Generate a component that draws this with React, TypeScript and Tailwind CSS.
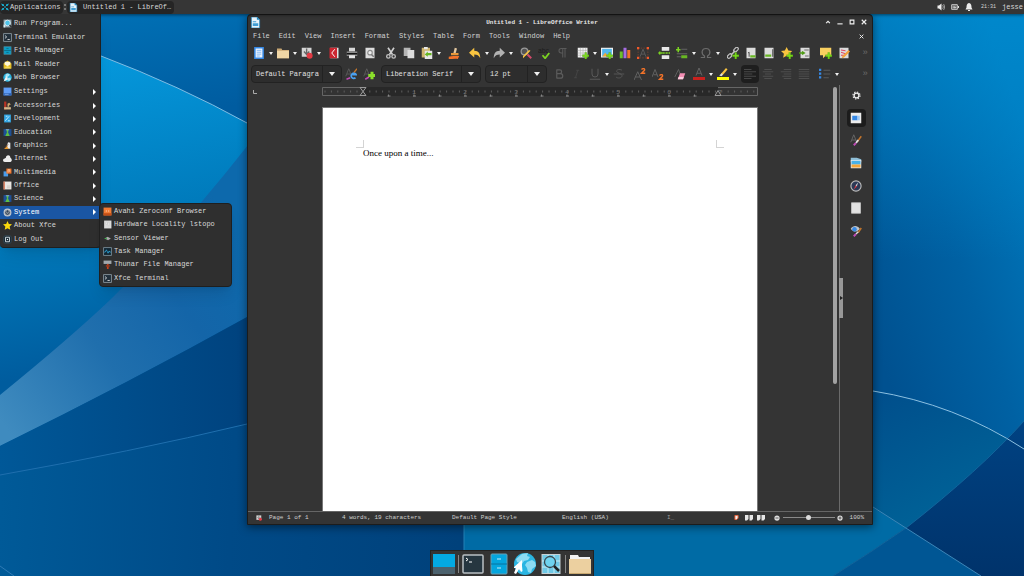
import React from 'react';

type IconProps = { name: string; className?: string };

// All icons are drawn on a 16x16 grid
const plus = (
  <path d="M11 8v3H8v2.500h3v3h2.500v-3h3V11h-3V8z" transform="translate(-.6 -.6)" fill="#7bdc1c" stroke="#3f8a0a" strokeWidth=".4" />
);
const sheet = <path d="M2 1h12v14H2z" fill="#dcdcdc" />;

const icons: Record<string, React.ReactNode> = {
  xfce: (
    <g fill="#19b4d8">
      <path d="M0 1l6 2v3H3zM16 1l-6 2v3h3zM0 15l6-2v-3H3zM16 15l-6-2v-3h3z" />
      <path d="M6 7h4v2H6z" />
    </g>
  ),
  writer: (
    <>
      <path d="M2 0h8l4 4v12H2z" fill="#e8f4fb" stroke="#1c88c4" />
      <path d="M10 0v4h4z" fill="#1c88c4" />
      <path d="M4 6h5v1.500H4zM4 9h8v4H4z" fill="#3f9dd4" />
    </>
  ),
  run: (
    <>
      <path d="M1 1h14v14H1z" fill="#8f9ea6" />
      <circle cx="8" cy="7" r="5" fill="#4fc3e8" stroke="#e8f2f5" strokeWidth="1.500" />
      <path d="M11.500 10.500l3.500 4" stroke="#222" strokeWidth="2" />
      <path d="M1 10h3v5H1z" fill="#d8eef5" />
    </>
  ),
  terminal: (
    <>
      <path d="M1 1h14v14H1z" fill="#22303b" stroke="#8d9aa3" strokeWidth="1.500" />
      <path d="M3.500 4.500l3 2.500-3 2.500M8 11.500h4" stroke="#e8e8e8" strokeWidth="1.500" fill="none" />
    </>
  ),
  files: (
    <>
      <path d="M1.500 1h13v14h-13z" fill="#0b9cc4" stroke="#587f8c" />
      <path d="M2 8h12M6 4.500h4M6 11.500h4" stroke="#075e77" strokeWidth="1.200" />
    </>
  ),
  mail: (
    <>
      <path d="M1 6l7-5 7 5v9H1z" fill="#e3bd24" />
      <path d="M3 3h10v5l-5 3-5-3z" fill="#fff8d8" />
      <path d="M1 15l7-5 7 5z" fill="#f6dc5a" />
    </>
  ),
  globe: (
    <>
      <circle cx="8" cy="8" r="7.500" fill="#27b0dc" />
      <path d="M8 1l4 1-1 3-3 2 1 2 4-1 1 3-3 3-3-1-1-4-3-3 1-4z" fill="#a5e4f5" />
      <path d="M1 15L6 5l2 7z" fill="#f3f3f3" />
    </>
  ),
  settings: (
    <>
      <path d="M1 1h14v14H1z" fill="#5f9df5" />
      <path d="M1 11h14v4H1z" fill="#2c64b8" />
      <path d="M3 13h7" stroke="#b9d4fa" />
    </>
  ),
  accessories: (
    <>
      <path d="M2 1h4v14H2z" fill="#b83424" />
      <path d="M2 11h12v4H2z" fill="#d7b98a" />
      <path d="M8 10V5l3-2 3 3-3 1v3z" fill="#cfa46a" />
    </>
  ),
  development: (
    <>
      <path d="M2 1h12v14H2z" fill="#33a7e5" />
      <path d="M4 12l7-8M5 4h3M9 12h3" stroke="#d7f0fc" strokeWidth="1.500" />
    </>
  ),
  education: (
    <>
      <path d="M1 2h14v12H1z" fill="#1d5097" />
      <path d="M6 3h4l-1 5 3 6H4l3-6z" fill="#5ebd45" />
      <path d="M5 3h6" stroke="#c8e1ff" />
    </>
  ),
  graphics: (
    <>
      <path d="M2 14l5-6 4 6z" fill="#e89b31" />
      <path d="M9 2l4 1v11l-4-1-2-5z" fill="#ececec" />
      <path d="M9 6l-6 7" stroke="#7c4a20" strokeWidth="1.500" />
    </>
  ),
  internet: <path d="M3 14a3 3 0 010-6c1-1 2-1 2-1 0-6 8-6 8-1 4 3 3 8 0 8z" fill="#ededed" />,
  multimedia: (
    <>
      <path d="M1 6h8v9H1z" fill="#4b9be8" />
      <path d="M6 1h9v9H6z" fill="#f0772e" />
      <path d="M9 8V3h3v4" stroke="#fff0e0" fill="none" />
    </>
  ),
  office: (
    <>
      <path d="M1 1h14v14H1z" fill="#e9e6e2" />
      <path d="M1 1h2v14H1z" fill="#d0582f" />
      <path d="M7 9h6M7 12h6" stroke="#b9b2a8" />
    </>
  ),
  system: (
    <>
      <circle cx="8" cy="8" r="6" fill="#8c939c" stroke="#c3c8cf" strokeWidth="2" />
      <path d="M8 4v4M6 6a3 3 0 104 0" stroke="#24364f" fill="none" strokeWidth="1.500" />
    </>
  ),
  star: <path d="M8 0l2.400 5.300 5.600.6-4.200 3.900 1.200 5.700L8 12.700 3 15.500l1.200-5.700L0 5.900l5.600-.6z" fill="#fbd80c" />,
  logout: (
    <>
      <rect x="1" y="1" width="14" height="14" rx="4" fill="#1b2b36" stroke="#3c525f" />
      <path d="M4.500 4h7v8h-7z" fill="none" stroke="#e5eef2" strokeWidth="1.500" />
      <path d="M7 8h2" stroke="#e5eef2" strokeWidth="2" />
    </>
  ),
  avahi: (
    <>
      <path d="M1 1h14v14H1z" fill="#f27b34" />
      <path d="M1 11h14v4H1z" fill="#c54f16" />
      <path d="M5 6h2v2H5zM9 6h2v2H9z" fill="#ffd3b5" />
    </>
  ),
  hardware: (
    <>
      <path d="M2 1h13v14H2z" fill="#dcdcdc" />
      <path d="M5 4h3v3H5zM9 4h2v6H9z" fill="#f7f7f7" stroke="#b5b5b5" strokeWidth=".6" />
    </>
  ),
  sensor: (
    <>
      <path d="M3 8l5-3 6 3-5 3z" fill="#a9a9a9" />
      <path d="M3 7h4v2H3z" fill="#42ad50" />
    </>
  ),
  task: (
    <>
      <path d="M1 1h14v14H1z" fill="#132733" stroke="#8aa0ad" strokeWidth="1.300" />
      <path d="M2 9h2l2-4 3 6 2-4 1 2h2" stroke="#2fa8dc" strokeWidth="1.400" fill="none" />
    </>
  ),
  thunar: (
    <>
      <path d="M1 1h14v6H1z" fill="#a0a7ab" />
      <path d="M7 7h3v9H7z" fill="#c7401a" />
      <path d="M5 9h7v3H5z" fill="#94351b" />
    </>
  ),
  newdoc: (
    <>
      <path d="M2.500 1h11v14h-11z" fill="#e9f3ff" stroke="#3689e6" strokeWidth="2" />
      <path d="M5 4.500h6M5 7h6M5 9.500h6M5 12h4" stroke="#6aaaf0" />
    </>
  ),
  open: (
    <>
      <path d="M0 2h6l1 2h9v11H0z" fill="#c9a773" />
      <path d="M0 5h16v10H0z" fill="#f0d6a5" />
    </>
  ),
  save: (
    <>
      <path d="M1 1h13v12H1z" fill="#d4d4d4" />
      <path d="M7.500 2v7M4 6l3.500 4L11 6" stroke="#666" strokeWidth="1.800" fill="none" />
      <circle cx="11.500" cy="11.500" r="4" fill="#e33b44" />
    </>
  ),
  pdf: (
    <>
      <path d="M3 1h11v14H3z" fill="#e3e3e3" />
      <path d="M2 1h10v14H2z" fill="#cc2630" />
      <path d="M9 3L5 8l4 5" stroke="#fff" strokeWidth="1.300" fill="none" />
    </>
  ),
  print: (
    <>
      <path d="M4 1h8v5H4z" fill="#d8d8d8" />
      <path d="M1 6h14v6H1z" fill="#8a8a8a" />
      <path d="M1 8h14v2H1z" fill="#141414" />
      <path d="M4 11h8v4H4z" fill="#e6e6e6" />
    </>
  ),
  preview: (
    <>
      {sheet}
      <circle cx="8" cy="7.500" r="3" fill="#eee" stroke="#8a8a8a" strokeWidth="1.500" />
      <path d="M10 10l3 3" stroke="#777" strokeWidth="2" />
    </>
  ),
  cut: (
    <>
      <path d="M4 1l6 9M12 1L6 10" stroke="#d0d0d0" strokeWidth="2.200" />
      <circle cx="4.500" cy="12.500" r="2.300" fill="none" stroke="#c0c0c0" strokeWidth="1.800" />
      <circle cx="11.500" cy="12.500" r="2.300" fill="none" stroke="#c0c0c0" strokeWidth="1.800" />
    </>
  ),
  copy: (
    <>
      <path d="M1 1h9v11H1z" fill="#b4b4b4" />
      <path d="M6 4h9v11H6z" fill="#dcdcdc" />
    </>
  ),
  paste: (
    <>
      <path d="M1 1h11v13H1z" fill="#cfb56d" />
      <path d="M4 0h5v3H4z" fill="#e8e8e8" />
      <path d="M5 5h10v11H5z" fill="#e6e6e6" />
      <path d="M14 8H9V6l-4 4 4 3v-2h5z" fill="#68b723" />
    </>
  ),
  clone: (
    <>
      <path d="M9 1l3 1-2 7H7z" fill="#e5c9a0" />
      <path d="M4 8h10v3H4z" fill="#e8983a" />
      <path d="M1 13c4-1 8-1 14-1l-2 4c-3-1-8 0-12 0z" fill="#f37329" />
    </>
  ),
  undo: <path d="M7 1v4c6 0 8 4 8 10-2-4-4-5-8-5v4L0 7.500z" fill="#f9c440" />,
  redo: <path d="M9 1v4c-6 0-8 4-8 10 2-4 4-5 8-5v4l7-6.500z" fill="#b2b2b2" />,
  find: (
    <>
      <circle cx="6" cy="6" r="4.500" fill="#555" stroke="#9a9a9a" strokeWidth="1.600" />
      <path d="M10 10l5 5" stroke="#d34a6a" strokeWidth="2.500" />
      <path d="M14 5l-8 8-2 2 0-3 8-8z" fill="#f9c440" />
    </>
  ),
  spell: (
    <>
      <text x="0" y="8" fontSize="9" fill="#1c1c1c" fontFamily="Liberation Sans, sans-serif">abc</text>
      <path d="M6 11l3.500 4L15 8" stroke="#7bd321" strokeWidth="2.400" fill="none" />
    </>
  ),
  pilcrow: <path d="M9 14V2M12 14V2M14 2H7a3 3 0 000 6h2" stroke="#5a5a5a" strokeWidth="1.400" fill="none" />,
  table: (
    <>
      <path d="M1 1h13v13H1z" fill="#f1f1f1" />
      <path d="M1 4.500h13M1 8h13M1 11h13M4.500 1v13M8 1v13M11.500 1v13" stroke="#a5a5a5" strokeWidth=".7" />
      {plus}
    </>
  ),
  image: (
    <>
      <path d="M0 1h16v13H0z" fill="#f2f2f2" />
      <path d="M1.500 2.500h13v10h-13z" fill="#54b8ee" />
      <path d="M1.500 12.500l4-5 3 3 2-2 4 4z" fill="#f7a638" />
      {plus}
    </>
  ),
  chart: (
    <>
      <path d="M1 6h4v9H1z" fill="#6cc02b" />
      <path d="M6 1h4v14H6z" fill="#a56de2" />
      <path d="M11 4h4v11h-4z" fill="#f37329" />
    </>
  ),
  textbox: (
    <>
      <path d="M1.500 1.500h13v13h-13z" fill="none" stroke="#7d4a33" strokeDasharray="2 1.500" />
      <path d="M0 0h3v3H0zM13 0h3v3h-3zM0 13h3v3H0zM13 13h3v3h-3z" fill="#f1592b" />
      <path d="M4 13L8 3l4 10M5.500 9.500h5" stroke="#666" fill="none" />
    </>
  ),
  pagebreak: (
    <>
      <path d="M5 0h10v5H5zM5 11h10v5H5z" fill="#e9e9e9" />
      <path d="M6 8h10" stroke="#7bd321" strokeWidth="2" strokeDasharray="3 1" />
      <path d="M0 8l3-3v2h3v2H3v2z" fill="#7bd321" />
    </>
  ),
  field: (
    <>
      <path d="M3 0v7M0 3.500h6" stroke="#7bd321" strokeWidth="2" />
      <path d="M7 3h8M1 9h14M1 13h6" stroke="#666" strokeWidth="1.300" />
      <path d="M7 11h8v4H7z" fill="#68b723" />
    </>
  ),
  omega: <path d="M1 14h5v-2c-5-3-4-10 2-10s7 7 2 10v2h5" stroke="#6c6c6c" strokeWidth="1.600" fill="none" />,
  link: (
    <>
      <path d="M5 11l6-6" stroke="#c4c4c4" strokeWidth="2" />
      <rect x="0" y="10" width="7" height="4" rx="2" transform="rotate(-45 3.500 12)" stroke="#c4c4c4" strokeWidth="1.500" fill="none" />
      <rect x="8.500" y="1.500" width="7" height="4" rx="2" transform="rotate(-45 12 3.500)" stroke="#c4c4c4" strokeWidth="1.500" fill="none" />
      {plus}
    </>
  ),
  footnote: (
    <>
      {sheet}
      <path d="M4 8l1.500-1v6" stroke="#444" strokeWidth="1.200" fill="none" />
      <path d="M7 11h7v3H7z" fill="#68b723" />
    </>
  ),
  endnote: (
    <>
      {sheet}
      <path d="M13 3v10" stroke="#555" strokeWidth="1.500" />
      <path d="M3 10h8v3H3z" fill="#68b723" />
    </>
  ),
  bookmark: (
    <>
      <path d="M7.500 0l2.300 4.800 5.200.6-3.900 3.600 1.100 5.200-4.700-2.600-4.700 2.600L3.900 9 0 5.400l5.200-.6z" fill="#f9c440" />
      {plus}
    </>
  ),
  crossref: (
    <>
      {sheet}
      <path d="M7 4h6M8 12h5" stroke="#6a6a6a" strokeWidth="1.300" />
      <path d="M0 8h6M4 6l3 2-3 2" stroke="#4f9c16" strokeWidth="2" fill="none" />
    </>
  ),
  comment: (
    <>
      <path d="M0 1h15v10H8l-4 4v-4H0z" fill="#f9d060" />
      {plus}
    </>
  ),
  track: (
    <>
      {sheet}
      <path d="M4 4l6 1M4 7l6 2M4 11h4" stroke="#e0405a" strokeWidth="1.300" />
      <path d="M14 4l2 2-8 8-3 1 1-3z" fill="#f3a13a" />
    </>
  ),
  updateStyle: (
    <>
      <path d="M1 11L5 1l4 10M2.500 8h5" stroke="#5c5c5c" fill="none" strokeWidth="1.200" />
      <path d="M2 15l5-2" stroke="#c04bb5" strokeWidth="2" />
      <path d="M14 13a3.500 3.500 0 111-4H9" stroke="#4aa0f0" strokeWidth="2.200" fill="none" />
      <path d="M16 1l-4 5" stroke="#c4752b" strokeWidth="1.800" />
    </>
  ),
  newStyle: (
    <>
      <path d="M1 11L5 1l4 10M2.500 8h5" stroke="#5c5c5c" fill="none" strokeWidth="1.200" />
      <path d="M3 15l5-3" stroke="#c04bb5" strokeWidth="2" />
      <path d="M10 5v3H7v4h3v3h4v-3h3V8h-3V5z" fill="#8be02a" />
    </>
  ),
  bold: <path d="M5 2v12M5 2.500h4a2.500 2.500 0 010 5H5h5a3 3 0 010 6H5" stroke="#5c5c5c" strokeWidth="1.600" fill="none" />,
  italic: <path d="M7 3h4M4 13h4M9 3L6 13" stroke="#4a4a4a" fill="none" />,
  underline: <path d="M4 1v7a4 4 0 008 0V1M1 15h14" stroke="#5a5a5a" strokeWidth="1.300" fill="none" />,
  strike: <path d="M12 3c-3-2-8-1-7 2 1 2 6 2 7 5 0 4-6 4-8 2M1 8h14" stroke="#565656" strokeWidth="1.300" fill="none" />,
  sup: (
    <>
      <path d="M0 16L5 5l5 11M2 12h6" stroke="#636363" fill="none" strokeWidth="1.300" />
      <path d="M10 2c2-2 5-1 4 1l-4 4h5" stroke="#f37329" strokeWidth="1.800" fill="none" />
    </>
  ),
  sub: (
    <>
      <path d="M0 12L4 2l4 10M2 9h5" stroke="#636363" fill="none" strokeWidth="1.300" />
      <path d="M10 10c2-2 5-1 4 1l-4 4h5" stroke="#f37329" strokeWidth="1.800" fill="none" />
    </>
  ),
  eraser: (
    <>
      <path d="M1 12L6 2l3 8" stroke="#636363" fill="none" strokeWidth="1.200" />
      <path d="M8 7h7l-3 8H5z" fill="#f58fb5" />
      <path d="M6 12h7l-1 3H5z" fill="#fbd0e0" />
    </>
  ),
  fontColor: (
    <>
      <path d="M4 10L8 0l4 10M5.500 7h5" stroke="#6a6a6a" fill="none" strokeWidth="1.200" />
      <path d="M0 12h16v4H0z" fill="#c9211e" />
    </>
  ),
  highlight: (
    <>
      <path d="M12 0l2 2-6 7-3 1 1-3z" fill="#f9c440" />
      <path d="M3 10l3-3 2 2-2 2z" fill="#ddd" />
      <path d="M0 12h16v4H0z" fill="#ff0" />
    </>
  ),
  alignLeft: <path d="M0 2h10M0 5h16M0 8h11M0 11h16M0 14h10" stroke="#555" />,
  alignCenter: <path d="M3 2h10M1 5h14M4 8h8M1 11h14M3 14h10" stroke="#575757" />,
  alignRight: <path d="M5 2h10M1 5h14M5 8h10M3 11h12M5 14h10" stroke="#575757" />,
  justify: <path d="M1 2h14M1 5h14M1 8h14M1 11h14M1 14h14" stroke="#575757" />,
  bullets: (
    <>
      <path d="M0 1h3v3H0zM0 6h3v3H0zM0 11h3v3H0z" fill="#3689e6" />
      <path d="M6 3h9M6 8h9M6 13h7" stroke="#5c5c5c" strokeWidth="1.300" />
    </>
  ),
  gear: (
    <>
      <circle cx="8" cy="8" r="4.300" fill="none" stroke="#ececec" strokeWidth="2.400" />
      <circle cx="8" cy="8" r="6.300" fill="none" stroke="#ececec" strokeWidth="2" strokeDasharray="2.500 2.450" />
    </>
  ),
  properties: (
    <>
      <path d="M1 1h14v14H1z" fill="#ececec" />
      <path d="M3 5h7v6H3z" fill="#3689e6" />
      <path d="M10 5h3v6h-3z" fill="#9ec8f5" />
    </>
  ),
  styles: (
    <>
      <path d="M1 11L5 1l4 10M2.500 8h5" stroke="#6a6a6a" fill="none" strokeWidth="1.200" />
      <path d="M15 3l-5 7" stroke="#c4752b" strokeWidth="2" />
      <path d="M11 8l-3 4" stroke="#ddd" strokeWidth="2.500" />
      <path d="M8 12l-3 3" stroke="#c04bb5" strokeWidth="2.500" />
    </>
  ),
  gallery: (
    <>
      <path d="M1 1h8l6 2v4H1z" fill="#8fbfd8" />
      <path d="M1 4h14v11H1z" fill="#ececec" />
      <path d="M2 5h12v5H2z" fill="#48b1e8" />
      <path d="M2 10h12v4H2z" fill="#f7a638" />
    </>
  ),
  navigator: (
    <>
      <circle cx="8" cy="8" r="6.800" fill="#2c3956" stroke="#bcbcbc" strokeWidth="1.500" />
      <path d="M11 3L9 8.500 7.500 7z" fill="#d8d8d8" />
      <path d="M5 13l2.500-6L9 8.500z" fill="#e33b44" />
    </>
  ),
  page: <path d="M2 1h12v14H2z" fill="#e2e2e2" stroke="#c8c8c8" />,
  inspector: (
    <>
      <path d="M1 5c3-5 9-5 12 0-3 5-9 5-12 0z" fill="#c0c4c8" />
      <circle cx="6" cy="5.500" r="3" fill="#3689e6" />
      <path d="M15 4l-4 6" stroke="#c4752b" strokeWidth="2" />
      <path d="M11 9l-3 3" stroke="#ddd" strokeWidth="2" />
      <path d="M8 12l-3 3" stroke="#c04bb5" strokeWidth="2.500" />
    </>
  ),
  volume: (
    <>
      <path d="M1 5h3l5-4v14l-5-4H1z" fill="#eee" />
      <path d="M11 4c2 2 2 6 0 8M13 2c3 3 3 9 0 12" stroke="#bbb" strokeWidth="1.500" fill="none" />
    </>
  ),
  battery: (
    <>
      <rect x="1" y="3" width="12" height="10" rx="1" fill="#777" stroke="#ccc" strokeWidth="1.500" />
      <path d="M14 6h2v4h-2zM3 9l4-3v2h4l-4 3V9z" fill="#ddd" />
    </>
  ),
  bell: <path d="M8 0c4 1 5 4 5 9l2 4H1l2-4c0-5 1-8 5-9zM6 14h4v2H6z" fill="#ececec" />,
  shade: <path d="M3 11l5-5 5 5" stroke="#f0f0f0" strokeWidth="3" fill="none" />,
  minimize: <path d="M1 13h14" stroke="#f0f0f0" strokeWidth="3" />,
  maximize: <path d="M3 3h10v10H3z" stroke="#f0f0f0" strokeWidth="3" fill="none" />,
  close: <path d="M2 2l12 12M14 2L2 14" stroke="#f0f0f0" strokeWidth="3" />,
  singlePage: <path d="M3 1h10v9l-5 5H3z" fill="#f0f0f0" stroke="#f1592b" strokeWidth="3" />,
  multiPage: <path d="M0 2h7v8l-3 3H0zM9 2h7v8l-3 3H9z" fill="#e6e6e6" />,
  zoomOut: (
    <>
      <circle cx="8" cy="8" r="7" fill="#ddd" />
      <path d="M4 8h8" stroke="#333" strokeWidth="2" />
    </>
  ),
  zoomIn: (
    <>
      <circle cx="8" cy="8" r="7" fill="#ddd" />
      <path d="M4 8h8M8 4v8" stroke="#333" strokeWidth="2" />
    </>
  ),
};

const Icon: React.FC<IconProps> = ({ name, className = 'size-3' }) => (
  <svg viewBox="0 0 16 16" className={`shrink-0 ${className}`} aria-hidden="true">
    {icons[name]}
  </svg>
);

const Wallpaper: React.FC = () => (
  <svg viewBox="0 0 1024 576" preserveAspectRatio="none" className="absolute inset-0 h-full w-full" aria-hidden="true">
    <defs>
      <linearGradient id="sky" gradientUnits="userSpaceOnUse" x1="0" y1="14" x2="20" y2="140">
        <stop offset="0" stopColor="#0073b8" />
        <stop offset="1" stopColor="#005ca0" />
      </linearGradient>
      <linearGradient id="swell" gradientUnits="userSpaceOnUse" x1="100" y1="56" x2="160" y2="350">
        <stop offset="0" stopColor="#0598dc" />
        <stop offset="0.550" stopColor="#007abb" />
        <stop offset="1" stopColor="#005c9e" />
      </linearGradient>
      <linearGradient id="beam" gradientUnits="userSpaceOnUse" x1="0" y1="420" x2="247" y2="240">
        <stop offset="0" stopColor="#3f8bbf" />
        <stop offset="0.400" stopColor="#206fad" />
        <stop offset="0.700" stopColor="#1465a8" />
        <stop offset="1" stopColor="#0d69ac" />
      </linearGradient>
      <linearGradient id="deep" gradientUnits="userSpaceOnUse" x1="0" y1="440" x2="240" y2="440">
        <stop offset="0" stopColor="#005898" />
        <stop offset="1" stopColor="#00437f" />
      </linearGradient>
      <linearGradient id="floor" gradientUnits="userSpaceOnUse" x1="0" y1="520" x2="460" y2="540">
        <stop offset="0" stopColor="#005a98" />
        <stop offset="0.500" stopColor="#004a87" />
        <stop offset="1" stopColor="#00417b" />
      </linearGradient>
      <linearGradient id="right" gradientUnits="userSpaceOnUse" x1="860" y1="300" x2="1060" y2="230">
        <stop offset="0" stopColor="#005190" />
        <stop offset="0.500" stopColor="#0061a3" />
        <stop offset="1" stopColor="#0077bb" />
      </linearGradient>
      <linearGradient id="glow" x1="0" y1="0" x2="0" y2="1">
        <stop offset="0" stopColor="#0092d6" stopOpacity="0.650" />
        <stop offset="1" stopColor="#0092d6" stopOpacity="0" />
      </linearGradient>
      <linearGradient id="bowl" gradientUnits="userSpaceOnUse" x1="873" y1="400" x2="940" y2="520">
        <stop offset="0" stopColor="#004f8c" />
        <stop offset="1" stopColor="#006297" />
      </linearGradient>
      <linearGradient id="navy" x1="0" y1="0" x2="0" y2="1">
        <stop offset="0" stopColor="#004282" />
        <stop offset="1" stopColor="#00336b" />
      </linearGradient>
    </defs>
    <path d="M0 0h1024v576H0z" fill="url(#sky)" />
    <path d="M0 20Q60 38 101 56Q180 86 247 123Q320 160 380 220V400H0z" fill="url(#swell)" />
    <path d="M101 56Q180 86 247 123" fill="none" stroke="#7fbde4" />
    <path d="M0 395Q70 338 110 300Q180 232 248 145L400 200L247 317Q130 382 0 446z" fill="url(#beam)" />
    <path d="M0 446Q130 382 247 317L464 300V576H0z" fill="url(#deep)" />
    <path d="M0 475Q130 452 247 424L464 400V576H0z" fill="url(#floor)" />
    <path d="M0 475Q130 452 247 424" fill="none" stroke="#1f6fae" />
    <path d="M0 566L14 576" stroke="#2d7ab5" />
    <path d="M464 500h560v76H464z" fill="#006ba5" />
    <path d="M464 500v76" stroke="#2382b8" />
    <path d="M700 0h324v470H700z" fill="url(#right)" />
    <path d="M700 0h324v260H700z" fill="url(#glow)" />
    <path d="M800 380Q955 400 1024 449L906 528Q870 553 833 576H800z" fill="url(#bowl)" />
    <path d="M860 500L906 528Q870 553 833 576H700V500z" fill="#006ba5" />
    <path d="M1024 421Q980 470 906 528Q870 553 833 576H1024z" fill="url(#navy)" />
    <path d="M906 528Q870 553 833 576H981z" fill="#005694" />
    <path d="M1024 421Q980 470 906 528Q870 553 833 576" fill="none" stroke="#12659c" />
    <path d="M873 507L981 576" stroke="#3c86b8" />
    <path d="M873 391Q955 404 1024 449" fill="none" stroke="#8cc0e0" />
  </svg>
);

type Entry = { label: string; icon: string; sub?: boolean; active?: boolean };

const launchers: Entry[] = [
  { label: 'Terminal Emulator', icon: 'terminal' },
  { label: 'File Manager', icon: 'files' },
  { label: 'Mail Reader', icon: 'mail' },
  { label: 'Web Browser', icon: 'globe' },
];

const categories: Entry[] = [
  { label: 'Accessories', icon: 'accessories', sub: true },
  { label: 'Development', icon: 'development', sub: true },
  { label: 'Education', icon: 'education', sub: true },
  { label: 'Graphics', icon: 'graphics', sub: true },
  { label: 'Internet', icon: 'internet', sub: true },
  { label: 'Multimedia', icon: 'multimedia', sub: true },
  { label: 'Office', icon: 'office', sub: true },
  { label: 'Science', icon: 'education', sub: true },
  { label: 'System', icon: 'system', sub: true, active: true },
];

const session: Entry[] = [
  { label: 'About Xfce', icon: 'star' },
  { label: 'Log Out', icon: 'logout' },
];

const systemTools: Entry[] = [
  { label: 'Avahi Zeroconf Browser', icon: 'avahi' },
  { label: 'Hardware Locality lstopo', icon: 'hardware' },
  { label: 'Sensor Viewer', icon: 'sensor' },
  { label: 'Task Manager', icon: 'task' },
  { label: 'Thunar File Manager', icon: 'thunar' },
  { label: 'Xfce Terminal', icon: 'terminal' },
];

const MenuGroup: React.FC<{ items: Entry[]; className: string }> = ({ items, className }) => (
  <ul className={`flex flex-col ${className}`}>
    {items.map((item) => (
      <li key={item.label} className="min-h-0 flex-1">
        <button
          className={`flex h-full w-full items-center gap-[2px] pr-1 pl-[3px] text-left ${
            item.active ? 'bg-[#1a56a4] text-white' : 'hover:bg-[#1a56a4]'
          }`}
        >
          <Icon name={item.icon} className="size-[9px]" />
          <span className="flex-1">{item.label}</span>
          {item.sub && (
            <svg viewBox="0 0 3 6" className="h-[6px] w-[3px]" aria-hidden="true">
              <path d="M0 0l3 3-3 3z" fill="#fff" />
            </svg>
          )}
        </button>
      </li>
    ))}
  </ul>
);

const Caret: React.FC = () => (
  <svg viewBox="0 0 4 3" className="h-[3px] w-1" aria-hidden="true">
    <path d="M0 0h4L2 3z" fill="#f0f0f0" />
  </svg>
);

type Tool = { icon: string; label: string; menu?: boolean; on?: boolean };

const standardBar: Tool[][] = [
  [
    { icon: 'newdoc', label: 'New', menu: true },
    { icon: 'open', label: 'Open', menu: true },
    { icon: 'save', label: 'Save', menu: true },
  ],
  [
    { icon: 'pdf', label: 'Export as PDF' },
    { icon: 'print', label: 'Print' },
    { icon: 'preview', label: 'Print Preview' },
  ],
  [
    { icon: 'cut', label: 'Cut' },
    { icon: 'copy', label: 'Copy' },
    { icon: 'paste', label: 'Paste', menu: true },
  ],
  [{ icon: 'clone', label: 'Clone Formatting' }],
  [
    { icon: 'undo', label: 'Undo', menu: true },
    { icon: 'redo', label: 'Redo', menu: true },
  ],
  [
    { icon: 'find', label: 'Find and Replace' },
    { icon: 'spell', label: 'Spelling' },
    { icon: 'pilcrow', label: 'Formatting Marks' },
  ],
  [
    { icon: 'table', label: 'Insert Table', menu: true },
    { icon: 'image', label: 'Insert Image' },
    { icon: 'chart', label: 'Insert Chart' },
    { icon: 'textbox', label: 'Insert Text Box' },
  ],
  [
    { icon: 'pagebreak', label: 'Insert Page Break' },
    { icon: 'field', label: 'Insert Field', menu: true },
    { icon: 'omega', label: 'Insert Special Character', menu: true },
  ],
  [
    { icon: 'link', label: 'Insert Hyperlink' },
    { icon: 'footnote', label: 'Insert Footnote' },
    { icon: 'endnote', label: 'Insert Endnote' },
    { icon: 'bookmark', label: 'Insert Bookmark' },
    { icon: 'crossref', label: 'Insert Cross-reference' },
  ],
  [
    { icon: 'comment', label: 'Insert Comment' },
    { icon: 'track', label: 'Track Changes' },
  ],
];

const ToolGroup: React.FC<{ tools: Tool[] }> = ({ tools }) => (
  <div className="flex items-center">
    {tools.map((tool) => (
      <React.Fragment key={tool.label}>
        <button
          aria-label={tool.label}
          className={`flex size-[18px] items-center justify-center rounded-sm ${tool.on ? 'bg-[#1e1e1e]' : ''}`}
        >
          <Icon name={tool.icon} className="size-3" />
        </button>
        {tool.menu && (
          <button aria-label={`${tool.label} options`} className="flex h-[18px] w-[6px] items-center justify-center">
            <Caret />
          </button>
        )}
      </React.Fragment>
    ))}
  </div>
);

const Combo: React.FC<{ label: string; value: string; className: string }> = ({ label, value, className }) => (
  <div className={`relative flex h-[18px] rounded-sm border border-[#222] bg-[#2d2d2d] ${className}`}>
    <select
      aria-label={label}
      className="min-w-0 flex-1 appearance-none overflow-hidden pr-[22px] pl-1 text-[7px] text-[#e0e0e0] outline-none"
    >
      <option>{value}</option>
    </select>
    <span className="pointer-events-none absolute inset-y-0 right-0 flex w-[19px] items-center justify-center border-l border-[#222]">
      <svg viewBox="0 0 6 4" className="h-1 w-[6px]" aria-hidden="true">
        <path d="M0 0h6L3 4z" fill="#f0f0f0" />
      </svg>
    </span>
  </div>
);

const Overflow: React.FC = () => (
  <button aria-label="More tools" className="ml-auto px-1 text-[9px] leading-none text-[#6a6a6a]">
    »
  </button>
);

const INCH = 51;

const Ruler: React.FC = () => (
  <svg viewBox="0 0 436 10" className="h-[10px] w-full" aria-hidden="true">
    <path d="M.5 .5h435v8H.5z" fill="#333" stroke="#666" />
    <path d="M41 0h355v9H41z" fill="#282828" />
    {Array.from({ length: 68 }, (_, i) => 3 + i * 6.4).map((x) => (
      <path key={x} d={`M${x} 3.500v2`} stroke="#5e5e5e" strokeWidth="1" />
    ))}
    {Array.from({ length: 13 }, (_, i) => 41 + ((i + 1) * INCH) / 2).map((x) => (
      <path key={x} d={`M${x - 1} 9h3M${x} 7.500v2`} stroke="#858585" />
    ))}
    {[1, 2, 3, 4, 5, 6, 7].map((n) => (
      <text key={n} x={41 + n * INCH} y="6.500" fontSize="6" textAnchor="middle" fill="#777">
        {n}
      </text>
    ))}
    <path d="M38 .5h6l-6 8h6z" fill="#333" stroke="#999" />
    <path d="M393 8.500l3-5 3 5z" fill="#333" stroke="#999" />
  </svg>
);

const sidebarTabs: Tool[] = [
  { icon: 'gear', label: 'Sidebar Settings' },
  { icon: 'properties', label: 'Properties', on: true },
  { icon: 'styles', label: 'Styles' },
  { icon: 'gallery', label: 'Gallery' },
  { icon: 'navigator', label: 'Navigator' },
  { icon: 'page', label: 'Page' },
  { icon: 'inspector', label: 'Style Inspector' },
];

const WriterWindow: React.FC = () => (
  <main className="absolute top-[14px] right-[151px] bottom-[51px] left-[247px] flex flex-col rounded-t-sm border border-[#1c1c1c] bg-[#343434] shadow-[0_2px_8px_rgba(0,0,0,0.5)]">
    <header className="flex h-[14px] shrink-0 items-center pr-[3px] pl-[2px]">
      <Icon name="writer" className="size-[11px]" />
      <h1 className="flex-1 text-center text-[6px] font-bold text-[#e6e6e6]">Untitled 1 - LibreOffice Writer</h1>
      <div className="flex gap-[2px]">
        {['shade', 'minimize', 'maximize', 'close'].map((name) => (
          <button key={name} aria-label={name} className="flex w-[10px] items-center justify-center">
            <Icon name={name} className="size-[6px]" />
          </button>
        ))}
      </div>
    </header>

    <nav className="flex h-[14px] shrink-0 items-center pr-2 pl-[1px] text-[7px] text-[#d2d2d2]">
      {['File', 'Edit', 'View', 'Insert', 'Format', 'Styles', 'Table', 'Form', 'Tools', 'Window', 'Help'].map((item) => (
        <button key={item} className="pr-[5px] pl-1">
          {item}
        </button>
      ))}
      <button aria-label="Close document" className="ml-auto">
        <Icon name="close" className="size-[5px]" />
      </button>
    </nav>

    {/* Standard toolbar */}
    <div className="flex h-[20px] shrink-0 items-center gap-[3px] pl-[2px]">
      {standardBar.map((group, i) => (
        <ToolGroup key={i} tools={group} />
      ))}
      <Overflow />
    </div>

    {/* Formatting toolbar */}
    <div className="flex h-[22px] shrink-0 items-center gap-[3px] pl-[3px]">
      <div className="flex items-center">
        <Combo label="Paragraph Style" value="Default Paragraph Style" className="w-[91px]" />
        <ToolGroup
          tools={[
            { icon: 'updateStyle', label: 'Update Style' },
            { icon: 'newStyle', label: 'New Style' },
          ]}
        />
      </div>
      <div className="flex gap-1">
        <Combo label="Font Name" value="Liberation Serif" className="w-[100px]" />
        <Combo label="Font Size" value="12 pt" className="w-[62px]" />
      </div>
      <ToolGroup
        tools={[
          { icon: 'bold', label: 'Bold' },
          { icon: 'italic', label: 'Italic' },
          { icon: 'underline', label: 'Underline', menu: true },
          { icon: 'strike', label: 'Strikethrough' },
        ]}
      />
      <ToolGroup
        tools={[
          { icon: 'sup', label: 'Superscript' },
          { icon: 'sub', label: 'Subscript' },
        ]}
      />
      <div className="flex items-center gap-[1px] pl-[1px]">
        <ToolGroup tools={[{ icon: 'eraser', label: 'Clear Formatting' }]} />
        <ToolGroup
          tools={[
            { icon: 'fontColor', label: 'Font Color', menu: true },
            { icon: 'highlight', label: 'Highlighting', menu: true },
          ]}
        />
      </div>
      <ToolGroup
        tools={[
          { icon: 'alignLeft', label: 'Align Left', on: true },
          { icon: 'alignCenter', label: 'Center' },
          { icon: 'alignRight', label: 'Align Right' },
          { icon: 'justify', label: 'Justify' },
        ]}
      />
      <ToolGroup tools={[{ icon: 'bullets', label: 'Bullets', menu: true }]} />
      <Overflow />
    </div>

    <div className="flex min-h-0 flex-1">
      <section className="flex min-w-0 flex-1 flex-col pt-[2px]">
        <div className="grid shrink-0 grid-cols-[1fr_436px_1fr] items-center">
          <svg viewBox="0 0 4 4" className="ml-[5px] size-1" aria-hidden="true">
            <path d="M.5 0v3.500H4" stroke="#aaa" fill="none" />
          </svg>
          <Ruler />
        </div>
        <article className="mx-auto mt-[10px] w-[436px] flex-1 border border-b-0 border-[#777] bg-white px-[33px] pt-8">
          <div className="flex justify-between">
            <span className="size-2 border-r border-b border-[#d4d4d4]" />
            <span className="size-2 border-b border-l border-[#d4d4d4]" />
          </div>
          <p className="pl-[7px] font-['Liberation_Serif',serif] text-[9px] leading-[10px] text-black">
            Once upon a time...
          </p>
        </article>
      </section>

      <div className="w-[7px] pt-[2px] pl-[1px]">
        <div className="h-[70%] w-1 rounded-full bg-[#a2a2a2]" />
      </div>

      <aside className="relative w-[33px] border-l border-[#6a6a6a] pt-[1px]">
        <div className="flex h-[154px] flex-col items-center justify-between">
          {sidebarTabs.map((tab) => (
            <button
              key={tab.label}
              aria-label={tab.label}
              className={`flex h-[18px] w-[19px] items-center justify-center rounded-sm ${tab.on ? 'bg-[#1c1c1c]' : ''}`}
            >
              <Icon name={tab.icon} className={tab.icon === 'gear' ? 'size-[9px]' : 'size-3'} />
            </button>
          ))}
        </div>
        <button
          aria-label="Collapse sidebar"
          className="absolute top-[193px] -left-px flex h-10 w-1 items-center justify-center bg-[#989898]"
        >
          <svg viewBox="0 0 3 4" className="h-1 w-[3px]" aria-hidden="true">
            <path d="M0 0l3 2-3 2z" fill="#222" />
          </svg>
        </button>
      </aside>
    </div>

    <footer className="flex h-[13px] shrink-0 items-center border-t border-[#666] pr-2 pb-[1px] pl-2 text-[6px] text-[#d0d0d0]">
      <Icon name="save" className="mr-[7px] size-[6px]" />
      <span className="w-[73px]">Page 1 of 1</span>
      <span className="w-[110px]">4 words, 19 characters</span>
      <span className="w-[110px]">Default Page Style</span>
      <span className="w-[105px]">English (USA)</span>
      <span className="text-[#999]">I_</span>
      <div className="ml-auto flex items-center">
        <button aria-label="Single-page view" className="mr-[6px]">
          <Icon name="singlePage" className="size-[5px]" />
        </button>
        <button aria-label="Multiple-page view" className="mr-1">
          <Icon name="multiPage" className="size-2" />
        </button>
        <button aria-label="Book view" className="mr-[9px]">
          <Icon name="multiPage" className="size-2" />
        </button>
        <button aria-label="Zoom out" className="mr-[3px]">
          <Icon name="zoomOut" className="size-[6px]" />
        </button>
        <input
          type="range"
          aria-label="Zoom"
          defaultValue={49}
          className="mr-[2px] h-px w-[52px] appearance-none bg-[#8a8a8a] [&::-webkit-slider-thumb]:size-[5px] [&::-webkit-slider-thumb]:appearance-none [&::-webkit-slider-thumb]:rounded-full [&::-webkit-slider-thumb]:bg-[#ddd]"
        />
        <button aria-label="Zoom in" className="mr-[7px]">
          <Icon name="zoomIn" className="size-[6px]" />
        </button>
        <span>100%</span>
      </div>
    </footer>
  </main>
);

const Dock: React.FC = () => (
  <div className="absolute inset-x-0 bottom-0 flex justify-center">
    <nav className="flex h-[26px] items-center border border-b-0 border-[#222] bg-[#343434]">
      <button aria-label="Show Desktop" className="flex w-[26px] justify-center">
        <svg viewBox="0 0 22 22" className="size-[22px]">
          <path d="M0 1h22v13H0z" fill="#04a9e2" />
          <path d="M0 14h22v7H0z" fill="#4c626e" />
        </svg>
      </button>
      <span className="mx-[1px] h-[18px] w-px bg-[#888]" />
      <button aria-label="Terminal" className="flex w-[26px] justify-center">
        <svg viewBox="0 0 22 22" className="size-[22px]">
          <rect x="1" y="2" width="20" height="18" rx="1" fill="#263640" stroke="#b9c0c4" strokeWidth="1.500" />
          <path d="M4 5l2 1.500L4 8M7 9h3" stroke="#fff" fill="none" />
        </svg>
      </button>
      <button aria-label="Files" className="flex w-[26px] justify-center">
        <svg viewBox="0 0 22 22" className="size-[22px]">
          <rect x="3" y="1" width="16" height="20" rx="1" fill="#05a5dd" stroke="#6b9fb3" />
          <path d="M3 11h16" stroke="#0873a0" />
          <path d="M9 6h4M9 15h4" stroke="#c8edf9" strokeWidth="1.200" />
        </svg>
      </button>
      <button aria-label="Web Browser" className="flex w-[26px] justify-center">
        <svg viewBox="0 0 22 22" className="size-[22px]">
          <circle cx="11" cy="11" r="11" fill="#2ab5e2" />
          <path d="M8 1l6-1-1 3 3 1-2 3-4 1-2 3-5-2-1-3z" fill="#8cdcf4" />
          <path d="M13 9l5-2 3 2 1 4-4 3-1 4-3-1-1-4-2-3zM3 11l5 2 1 5-2 1-4-4z" fill="#8cdcf4" />
          <path d="M8 7v12l-3-3-3 5-2-1 2-5H-1z" fill="#fff" />
        </svg>
      </button>
      <button aria-label="Application Finder" className="flex w-[26px] justify-center">
        <svg viewBox="0 0 22 22" className="size-[22px]">
          <rect x="2" y="1.500" width="18" height="19" fill="#70c9e6" stroke="#c7d1d5" />
          <path d="M8 2v18M14 2v18M2 8h18M2 14h18" stroke="#c8edf6" />
          <circle cx="10" cy="9" r="5.500" fill="#6fd3f0" stroke="#37474f" strokeWidth="1.300" />
          <path d="M14 13l5 5" stroke="#222" strokeWidth="2.500" />
        </svg>
      </button>
      <span className="mx-[1px] h-[18px] w-px bg-[#888]" />
      <button aria-label="Home folder" className="flex w-[26px] justify-center">
        <svg viewBox="0 0 22 22" className="size-[22px]">
          <path d="M1 2h8l1 2h11v5H1z" fill="#f2f2f2" />
          <path d="M0 6h22v15H0z" fill="#ecd0a0" />
          <path d="M0 20h22v1H0z" fill="#c8a870" />
        </svg>
      </button>
    </nav>
  </div>
);

const App: React.FC = () => {
  return (
    <div className="relative h-screen overflow-hidden bg-[#005a9c] font-['Liberation_Mono',monospace] text-[7px] leading-[9px] text-[#d8d8d8]">
      <Wallpaper />

      {/* Top panel */}
      <header className="relative z-10 flex h-[14px] items-center bg-[#363636] shadow-[0_1px_3px_rgba(0,0,0,0.5)]">
        <button className="flex h-[13px] w-[63px] items-center gap-[1px] rounded-sm bg-[#252525] pl-[1px]">
          <Icon name="xfce" className="size-2" />
          Applications
        </button>
        <span className="mx-[1px] h-[6px] border-l-2 border-dotted border-[#777]" />
        <button className="flex h-[13px] w-[107px] items-center gap-[5px] rounded-sm bg-[#252525] pl-[2px]">
          <Icon name="writer" className="size-[9px]" />
          Untitled 1 - LibreOf…
        </button>
        <div className="ml-auto flex items-center">
          <Icon name="volume" className="mr-[6px] size-2" />
          <Icon name="battery" className="mr-[6px] size-2" />
          <Icon name="bell" className="mr-2 size-2" />
          <time className="mr-[6px] text-[5px]">21:31</time>
          <span className="mr-[1px]">jesse</span>
        </div>
      </header>

      <WriterWindow />

      {/* Applications menu */}
      <nav className="absolute top-[14px] left-0 z-10 w-[101px] rounded-b-sm border-r border-b border-[#1f1f1f] bg-[#2f2f2f] pt-[2px] pb-[1px] shadow-lg">
        <MenuGroup items={[{ label: 'Run Program...', icon: 'run' }]} className="mb-[1px] h-[14px]" />
        <MenuGroup items={launchers} className="mb-[1px] h-[53px]" />
        <MenuGroup items={[{ label: 'Settings', icon: 'settings', sub: true }]} className="mb-[1px] h-[13px]" />
        <MenuGroup items={categories} className="h-[120px]" />
        <MenuGroup items={session} className="h-[27px]" />
      </nav>

      {/* System submenu */}
      <nav className="absolute top-[203px] left-[99px] z-20 w-[133px] rounded-sm border border-[#1f1f1f] bg-[#2f2f2f] py-[1px] shadow-lg">
        <MenuGroup items={systemTools} className="h-[80px]" />
      </nav>

      <Dock />
    </div>
  );
};

export default App;
